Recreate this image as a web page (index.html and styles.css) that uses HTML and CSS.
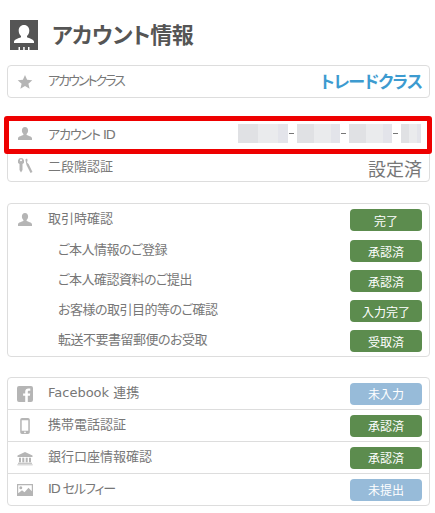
FILE: index.html
```html
<!DOCTYPE html>
<html lang="ja">
<head>
<meta charset="utf-8">
<title>アカウント情報</title>
<link rel="stylesheet" href="styles.css">
</head>
<body>
<div class="page">
  <h1 class="title">
    <svg class="title-icon" viewBox="0 0 28 30"><path fill="#555" d="M0 0h28v30H0z"/><path fill="#fff" d="M14 5c-3.400 0-5.300 2.500-5.300 5.600 0 2.300.9 4.300 2.300 5.400v1.200c-2.600 1-6.500 2.100-7 4.300v1.500h20v-1.500c-.5-2.200-4.400-3.300-7-4.300V16c1.400-1.100 2.300-3.100 2.300-5.400C19.300 7.500 17.400 5 14 5z"/><path fill="#fff" d="M8.500 27h1.500v3H8.500zM13.200 27h1.500v3h-1.500zM18 27h1.500v3H18z"/></svg>
    <span class="title-text">アカウント情報</span>
  </h1>

  <section class="box">
    <div class="row">
      <svg class="icon" viewBox="0 0 16 16"><path fill="#b5b5b5" d="M8 1l2.100 4.800 5.200.5-3.900 3.400 1.200 5.100L8 12.100l-4.600 2.700 1.200-5.100L.7 6.300l5.200-.5z"/></svg>
      <span class="label lift kana">アカウントクラス</span>
      <strong class="class-name">トレードクラス</strong>
    </div>
  </section>

  <section class="box box-id">
    <div class="row">
      <svg class="icon" viewBox="0 0 16 16"><path fill="#b5b5b5" d="M8 1C6 1 4.900 2.500 4.900 4.600c0 1.500.6 2.800 1.500 3.500v1C4.600 9.900 1.400 10.500 1 12.300V14h14v-1.700c-.4-1.800-3.600-2.400-5.400-3.200v-1c.9-.7 1.500-2 1.500-3.500C11.100 2.500 10 1 8 1z"/></svg>
      <span class="label semi">アカウント ID</span>
      <div class="masked">
        <i class="mask m50"></i><span class="dash"></span><i class="mask m43"></i><span class="dash"></span><i class="mask m43"></i><span class="dash"></span><i class="mask m20"></i>
      </div>
    </div>
    <div class="row">
      <svg class="icon" viewBox="0 0 16 16"><path fill="#b5b5b5" fill-rule="evenodd" d="M4 0a3.200 3.200 0 0 0-1.500 6V12L4 14.500 5.500 12V6A3.200 3.200 0 0 0 4 0zm0 1.300a1 1 0 1 1 0 2 1 1 0 0 1 0-2z"/><path fill="#b5b5b5" d="M8.300 1.500L10 .5l.6 1.500L10 4.500l1.600 1.500 3.900 8-2 1L9.500 7z"/></svg>
      <span class="label">二段階認証</span>
      <span class="value">設定済</span>
    </div>
    <div class="highlight"></div>
  </section>

  <section class="box box-trade">
    <div class="trade-row">
      <svg class="icon" viewBox="0 0 16 16"><path fill="#b5b5b5" d="M8 1C6 1 4.900 2.500 4.900 4.600c0 1.500.6 2.800 1.500 3.500v1C4.600 9.900 1.400 10.500 1 12.300V14h14v-1.700c-.4-1.800-3.600-2.400-5.400-3.200v-1c.9-.7 1.500-2 1.500-3.500C11.100 2.500 10 1 8 1z"/></svg>
      <span class="label">取引時確認</span>
      <span class="badge green">完了</span>
    </div>
    <div class="trade-row sub"><span class="label tight">ご本人情報のご登録</span><span class="badge green">承認済</span></div>
    <div class="trade-row sub"><span class="label tight">ご本人確認資料のご提出</span><span class="badge green">承認済</span></div>
    <div class="trade-row sub"><span class="label tight">お客様の取引目的等のご確認</span><span class="badge green">入力完了</span></div>
    <div class="trade-row sub"><span class="label tight">転送不要書留郵便のお受取</span><span class="badge green">受取済</span></div>
  </section>

  <section class="box box-last">
    <div class="row">
      <svg class="icon" viewBox="0 0 16 16"><path fill="#b5b5b5" d="M2 0h12a2 2 0 0 1 2 2v12a2 2 0 0 1-2 2h-3.200V9.800h2.100l.3-2.400h-2.400V5.900c0-.7.200-1.200 1.200-1.200h1.300V2.500c-.2 0-1-.1-1.900-.1-1.900 0-3.200 1.100-3.200 3.300v1.700H6.100v2.400h2.100V16H2a2 2 0 0 1-2-2V2a2 2 0 0 1 2-2z"/></svg>
      <span class="label lift">Facebook 連携</span>
      <span class="badge blue">未入力</span>
    </div>
    <div class="row">
      <svg class="icon" viewBox="0 0 16 16"><path fill="#b5b5b5" fill-rule="evenodd" d="M5 0h6a1.800 1.800 0 0 1 1.800 1.800v12.400A1.800 1.800 0 0 1 11 16H5a1.800 1.800 0 0 1-1.800-1.800V1.800A1.800 1.800 0 0 1 5 0zM4.700 2.200v10.500h6.600V2.200zM8 13.400a.9.900 0 1 0 0 1.800.9.900 0 0 0 0-1.800z"/></svg>
      <span class="label lift">携帯電話認証</span>
      <span class="badge green">承認済</span>
    </div>
    <div class="row">
      <svg class="icon" viewBox="0 0 16 16"><path fill="#b5b5b5" d="M8 2l7.500 3.500V7H.5V5.500zM2 7.700h2v4.500H2zM5.300 7.700h2v4.500h-2zM8.700 7.700h2v4.500h-2zM12 7.700h2v4.500h-2zM1 12.800h14v.9H1zM.3 14.400h15.400v.9H.3z"/></svg>
      <span class="label lift">銀行口座情報確認</span>
      <span class="badge green">承認済</span>
    </div>
    <div class="row">
      <svg class="icon" viewBox="0 0 16 14"><path fill="#b5b5b5" fill-rule="evenodd" d="M0 1h16v12H0zM1.200 2.200v8l3.800-3 2.500 2 4-4.500 3.300 3.500v-6zM3.800 3.200a1.500 1.500 0 1 1 0 3 1.500 1.500 0 0 1 0-3z"/></svg>
      <span class="label lift semi">ID セルフィー</span>
      <span class="badge blue">未提出</span>
    </div>
  </section>
</div>
</body>
</html>
```

FILE: styles.css
```css
* { box-sizing: border-box; }
html, body { margin: 0; padding: 0; background: #fff; }
body {
  font-family: "DejaVu Sans", "Noto Sans CJK JP", sans-serif;
  color: #777;
  width: 435px;
  height: 513px;
  overflow: hidden;
}
.page { padding: 20px 5px 0 7px; }
.title {
  display: flex;
  align-items: center;
  gap: 14px;
  margin: 0 0 15px 3px;
  height: 30px;
  font-size: 22px;
  font-weight: 700;
  color: #555;
}
.title-text { padding-bottom: 4px; letter-spacing: -0.4px; font-feature-settings: "palt"; }
.title-icon { width: 28px; height: 30px; flex: none; }
.box {
  position: relative;
  border: 1px solid #ddd;
  border-radius: 4px;
  background: #fff;
}
.box-id { margin-top: 19px; }
.box-trade { margin-top: 21px; height: 154px; }
.box-last { margin-top: 20px; }
.row {
  display: flex;
  align-items: center;
  height: 32px;
  padding: 0 7px 0 9px;
  border-top: 1px solid #ddd;
}
.row:first-child { border-top: 0; height: 31px; }
.icon { width: 16px; height: 16px; flex: none; }
.label {
  margin-left: 15px;
  font-size: 13px;
  color: #777;
  white-space: nowrap;
  font-feature-settings: "palt";
}
.lift { padding-bottom: 4px; }
.tight { letter-spacing: -0.5px; }
.semi { letter-spacing: -1.1px; }
.kana { letter-spacing: -2px; }
.class-name {
  margin-left: auto;
  padding-bottom: 2px;
  font-size: 17px;
  color: #3d9bd0;
  letter-spacing: -0.9px;
  font-feature-settings: "palt";
}
.value { margin-left: auto; padding-top: 4px; font-size: 18px; color: #777; }
.masked { margin-left: auto; display: flex; align-items: center; margin-right: 1px; }
.mask { display: block; height: 19px; background: linear-gradient(90deg, #e0e1e4 40%, #eaebed 40%, #eaebed 80%, #e3e4ea 80%); }
.m50 { width: 50px; }
.m43 { width: 43px; }
.m20 { width: 20px; }
.dash { width: 5px; height: 1px; margin: 0 3px 0 1px; background: #777; }
.highlight {
  position: absolute;
  left: -4px;
  right: -3px;
  top: -2px;
  height: 38px;
  border: 5px solid #ee0000;
  border-radius: 3px;
  pointer-events: none;
}
.trade-row {
  display: flex;
  align-items: center;
  height: 30px;
  padding: 0 7px 0 9px;
}
.trade-row:first-child { height: 32px; }
.trade-row .label { padding-bottom: 5px; }
.sub { padding-left: 35px; }
.badge {
  margin-left: auto;
  width: 72px;
  height: 22px;
  border-radius: 4px;
  display: flex;
  align-items: center;
  justify-content: center;
  font-size: 12px;
  color: #fff;
  flex: none;
}
.green { background: #5c8c4e; }
.blue { background: #97bbd9; }
```
